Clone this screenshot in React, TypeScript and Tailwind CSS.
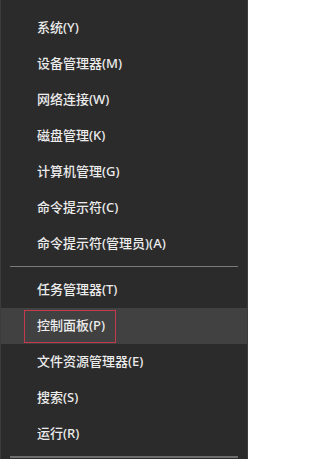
import React from "react";

const group1 = [
  "系统(Y)",
  "设备管理器(M)",
  "网络连接(W)",
  "磁盘管理(K)",
  "计算机管理(G)",
  "命令提示符(C)",
  "命令提示符(管理员)(A)",
];
const group2 = ["任务管理器(T)", "控制面板(P)", "文件资源管理器(E)", "搜索(S)", "运行(R)"];

function Row({ label, active }: { label: string; active?: boolean }) {
  return (
    <div className={`flex h-[36px] items-center ${active ? "bg-[#414141]" : ""}`}>
      {active ? (
        <div className="ml-[23px] flex h-[33px] items-center border border-[#c23a4b] pl-[12px] pr-[10px]">
          <span>{label}</span>
        </div>
      ) : (
        <span className="pl-[36px]">{label}</span>
      )}
    </div>
  );
}

export default function App() {
  return (
    <div
      className="flex h-[459px] w-[248px] flex-col border-x border-[#3c3c3c] bg-[#2b2b2b] pt-[10px] text-[13px] font-medium text-[#ececec]"
      style={{ fontFamily: '"Noto Sans", "Noto Sans CJK SC", sans-serif' }}
    >
      {group1.map((l) => (
        <Row key={l} label={l} />
      ))}
      <div className="mx-[9px] mb-[5px] mt-[4px] h-px bg-[#7a7a7a]" />
      {group2.map((l) => (
        <Row key={l} label={l} active={l === "控制面板(P)"} />
      ))}
      <div className="mx-[9px] mt-[4px] h-[2px] bg-[#6e6e6e]" />
    </div>
  );
}
